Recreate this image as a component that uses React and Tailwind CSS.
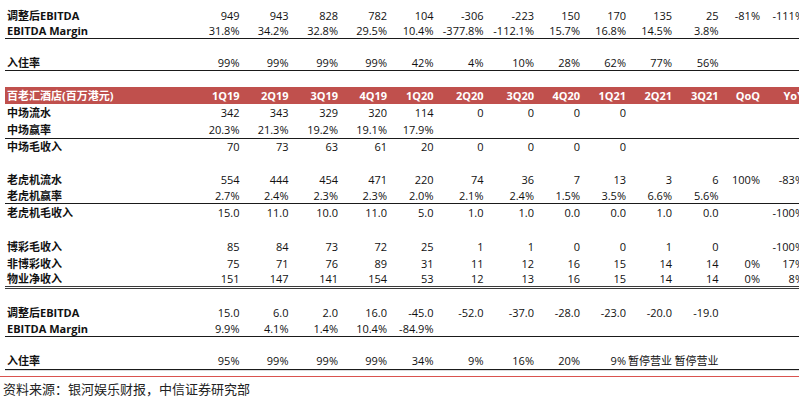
import React from "react";

const GRID =
  "grid grid-cols-[185px_49.5px_49px_49.5px_49px_46.5px_50px_50.5px_46px_46px_46px_46.5px_41.5px_44px] items-center";

const rows = [
  { h: "h-[16px]", label: "调整后EBITDA", v: ["949", "943", "828", "782", "104", "-306", "-223", "150", "170", "135", "25", "-81%", "-111%"] },
  { h: "h-[16px] border-b border-[#1a1a1a]", label: "EBITDA Margin", v: ["31.8%", "34.2%", "32.8%", "29.5%", "10.4%", "-377.8%", "-112.1%", "15.7%", "16.8%", "14.5%", "3.8%"] },
  { h: "h-[16px]" },
  { h: "h-[16px] border-b border-[#1a1a1a]", label: "入住率", v: ["99%", "99%", "99%", "99%", "42%", "4%", "10%", "28%", "62%", "77%", "56%"] },
  { h: "h-[16px]" },
  { h: "h-[17px] bg-[#c0504d] text-white", header: true, label: "百老汇酒店(百万港元)", v: ["1Q19", "2Q19", "3Q19", "4Q19", "1Q20", "2Q20", "3Q20", "4Q20", "1Q21", "2Q21", "3Q21", "QoQ", "YoY"] },
  { h: "h-[17px]", label: "中场流水", v: ["342", "343", "329", "320", "114", "0", "0", "0", "0"] },
  { h: "h-[17.5px] border-b border-[#1a1a1a]", label: "中场赢率", v: ["20.3%", "21.3%", "19.2%", "19.1%", "17.9%"] },
  { h: "h-[16.4px]", label: "中场毛收入", v: ["70", "73", "63", "61", "20", "0", "0", "0", "0"] },
  { h: "h-[16.4px]" },
  { h: "h-[16.4px]", label: "老虎机流水", v: ["554", "444", "454", "471", "220", "74", "36", "7", "13", "3", "6", "100%", "-83%"] },
  { h: "h-[16.4px] border-b border-[#1a1a1a]", label: "老虎机赢率", v: ["2.7%", "2.4%", "2.3%", "2.3%", "2.0%", "2.1%", "2.4%", "1.5%", "3.5%", "6.6%", "5.6%"] },
  { h: "h-[16.9px]", label: "老虎机毛收入", v: ["15.0", "11.0", "10.0", "11.0", "5.0", "1.0", "1.0", "0.0", "0.0", "1.0", "0.0", "", "-100%"] },
  { h: "h-[16.9px]" },
  { h: "h-[16.9px]", label: "博彩毛收入", v: ["85", "84", "73", "72", "25", "1", "1", "0", "0", "1", "0", "", "-100%"] },
  { h: "h-[16.9px]", label: "非博彩收入", v: ["75", "71", "76", "89", "31", "11", "12", "16", "15", "14", "14", "0%", "17%"] },
  { h: "h-[16.9px] border-b-[3px] border-double border-[#3a3a3a]", label: "物业净收入", v: ["151", "147", "141", "154", "53", "12", "13", "16", "15", "14", "14", "0%", "8%"] },
  { h: "h-[16px]" },
  { h: "h-[16px]", label: "调整后EBITDA", v: ["15.0", "6.0", "2.0", "16.0", "-45.0", "-52.0", "-37.0", "-28.0", "-23.0", "-20.0", "-19.0"] },
  { h: "h-[16px] border-b border-[#1a1a1a]", label: "EBITDA Margin", v: ["9.9%", "4.1%", "1.4%", "10.4%", "-84.9%"] },
  { h: "h-[16.6px]" },
  { h: "h-[16.6px] border-b border-[#1a1a1a]", label: "入住率", v: ["95%", "99%", "99%", "99%", "34%", "9%", "16%", "20%", "9%", "暂停营业", "暂停营业"] },
];

function Row({ r }) {
  if (!r.label) return <div className={r.h} />;
  const cells = [];
  for (let i = 0; i < 13; i++) cells.push(r.v[i] ?? "");
  return (
    <div className={`${GRID} ${r.h}`}>
      <div className="pl-[2px] font-bold whitespace-nowrap leading-none">{r.label}</div>
      {cells.map((c, i) => (
        <div
          key={i}
          className={`text-right whitespace-nowrap leading-none ${r.header ? "font-bold" : ""}`}
        >
          {c}
        </div>
      ))}
    </div>
  );
}

export default function App() {
  return (
    <div className="w-[799px] h-[414px] overflow-hidden bg-white text-[#111] font-['Open_Sans','Noto_Sans_CJK_SC',sans-serif] text-[11px]">
      <div className="w-[804px] pl-[5px] pt-[7px]">
        {rows.map((r, i) => (
          <Row key={i} r={r} />
        ))}
        <div className="h-px bg-[#dcdcdc]" />
      </div>
      <div className="mt-[5.5px] h-px w-full bg-[#d9534f]" />
      <div className="pl-[3px] pt-[2px] text-[13px] leading-[19px] text-[#222] font-['Noto_Sans_CJK_SC','Noto_Sans',sans-serif]">
        资料来源：银河娱乐财报，中信证券研究部
      </div>
    </div>
  );
}
